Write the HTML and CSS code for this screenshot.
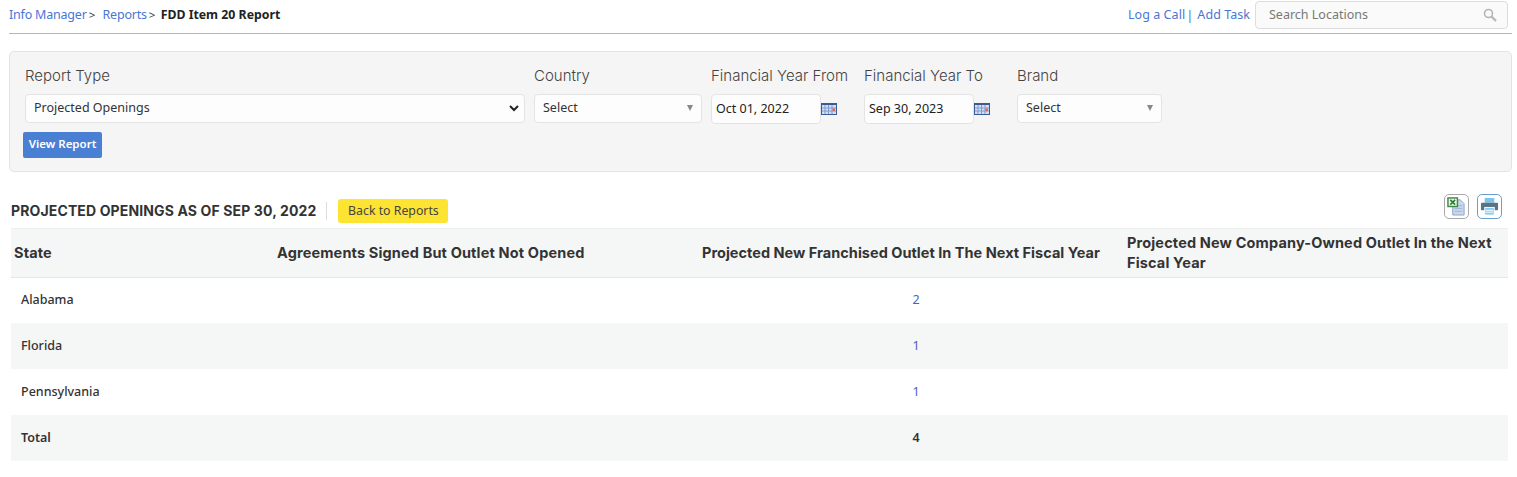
FILE: index.html
```html
<!DOCTYPE html>
<html lang="en">
<head>
    <meta charset="UTF-8">
    <title>FDD Item 20 Report</title>
    <link rel="stylesheet" href="styles.css">
</head>
<body>
    <div class="top-bar">
        <div class="breadcrumb">
            <a class="crumb-link">Info Manager</a><span class="crumb-sep first">&gt;</span>
            <a class="crumb-link">Reports</a><span class="crumb-sep">&gt;</span>
            <b class="crumb-current">FDD Item 20 Report</b>
        </div>
        <div class="top-actions">
            <a class="action-link">Log a Call</a><span class="action-sep">|</span>
            <a class="action-link">Add Task</a>
            <div class="search-box">
                <span class="search-text">Search Locations</span>
                <svg class="search-icon" width="14" height="14" viewBox="0 0 14 14">
                    <circle cx="5.5" cy="5.5" r="4" fill="none" stroke="#b5b5b5" stroke-width="1.6"/>
                    <path d="M8.5 8.5L13 13" stroke="#b5b5b5" stroke-width="2.2"/>
                </svg>
            </div>
        </div>
    </div>

    <div class="filter-panel">
        <div class="filter-row">
            <div class="field field-type">
                <label class="field-label">Report Type</label>
                <div class="select-box">
                    <span>Projected Openings</span>
                    <svg class="chevron" width="10" height="7" viewBox="0 0 10 7"><path d="M1 1l4 4 4-4" fill="none" stroke="#222" stroke-width="2"/></svg>
                </div>
            </div>
            <div class="field field-country">
                <label class="field-label">Country</label>
                <div class="select-box">
                    <span>Select</span><i class="caret"></i>
                </div>
            </div>
            <div class="field field-date">
                <label class="field-label">Financial Year From</label>
                <div class="date-wrap">
                    <div class="date-box">Oct 01, 2022</div>
                    <svg class="cal-icon" width="16" height="12" viewBox="0 0 16 12">
                        <rect width="16" height="12" fill="#3a5c94"/>
                        <rect x="1" y="2" width="14" height="9" fill="#d3def2"/>
                        <path d="M4 2v9M7.500 2v9M11 2v9M1 5h14M1 8h14" stroke="#7f9bd0" stroke-width="1"/>
                        <rect x="11.500" y="5.500" width="2.500" height="2.500" fill="#e0694f"/>
                    </svg>
                </div>
            </div>
            <div class="field field-date">
                <label class="field-label">Financial Year To</label>
                <div class="date-wrap">
                    <div class="date-box">Sep 30, 2023</div>
                    <svg class="cal-icon" width="16" height="12" viewBox="0 0 16 12">
                        <rect width="16" height="12" fill="#3a5c94"/>
                        <rect x="1" y="2" width="14" height="9" fill="#d3def2"/>
                        <path d="M4 2v9M7.500 2v9M11 2v9M1 5h14M1 8h14" stroke="#7f9bd0" stroke-width="1"/>
                        <rect x="11.500" y="5.500" width="2.500" height="2.500" fill="#e0694f"/>
                    </svg>
                </div>
            </div>
            <div class="field field-brand">
                <label class="field-label">Brand</label>
                <div class="select-box">
                    <span>Select</span><i class="caret"></i>
                </div>
            </div>
        </div>
        <button class="view-button">View Report</button>
    </div>

    <div class="report-head">
        <h2 class="report-title">PROJECTED OPENINGS AS OF SEP 30, 2022</h2>
        <button class="back-button">Back to Reports</button>
        <div class="report-tools">
            <span class="tool-btn tool-excel">
                <svg width="19" height="19" viewBox="0 0 20 20">
                    <path d="M6 3h8l4 4v12H6z" fill="#c9d7ec" stroke="#8ea6c8"/>
                    <path d="M8 9h8M8 12h8M8 15h8" stroke="#9db4d6"/>
                    <rect x="1" y="1" width="10" height="9" fill="#e9f3e6" stroke="#3e8a45" stroke-width="1.500"/>
                    <path d="M3.500 3l5 5M8.500 3l-5 5" stroke="#2b7a35" stroke-width="1.600"/>
                </svg>
            </span>
            <span class="tool-btn tool-print">
                <svg width="19" height="19" viewBox="0 0 20 20">
                    <rect x="5" y="1" width="10" height="5" fill="#7cc4ee"/>
                    <rect x="1" y="6" width="18" height="8" rx="1" fill="#5a7385"/>
                    <rect x="5" y="11" width="10" height="8" fill="#7fcdf2" stroke="#fff"/>
                    <path d="M6 14h8M6 16h8" stroke="#fff"/>
                </svg>
            </span>
        </div>
    </div>

    <table class="report-table">
        <colgroup>
            <col class="col-state">
            <col class="col-signed">
            <col class="col-franchised">
            <col class="col-company">
        </colgroup>
        <thead>
            <tr>
                <th>State</th>
                <th>Agreements Signed But Outlet Not Opened</th>
                <th class="head-tight">Projected New Franchised Outlet In The Next Fiscal Year</th>
                <th>Projected New Company-Owned Outlet In the Next Fiscal Year</th>
            </tr>
        </thead>
        <tbody>
            <tr class="first"><td class="state-cell">Alabama</td><td></td><td class="num-cell"><a class="num-link">2</a></td><td></td></tr>
            <tr class="alt"><td class="state-cell">Florida</td><td></td><td class="num-cell"><a class="num-link">1</a></td><td></td></tr>
            <tr><td class="state-cell">Pennsylvania</td><td></td><td class="num-cell"><a class="num-link">1</a></td><td></td></tr>
            <tr class="alt total"><td class="state-cell">Total</td><td></td><td class="num-cell">4</td><td></td></tr>
        </tbody>
    </table>
</body>
</html>
```

FILE: styles.css
```css
body {
    margin: 0;
    padding: 0 5px 0 9px;
    font-family: "Noto Sans", "Open Sans", sans-serif;
    font-size: 13px;
    color: #333;
    background: #fff;
}
.top-bar {
    display: flex;
    justify-content: space-between;
    align-items: center;
    height: 29px;
    padding-bottom: 4px;
    border-bottom: 1px solid #b5b5b5;
}
.breadcrumb {
    font-size: 12.5px;
    white-space: nowrap;
}
.crumb-link {
    color: #4a76d6;
    letter-spacing: -0.2px;
}
.crumb-sep {
    margin-left: 2px;
    font-size: 11.5px;
}
.crumb-sep.first {
    margin-right: 4px;
}
.crumb-sep + .crumb-current {
    margin-left: 2px;
}
.crumb-current {
    color: #222;
    font-size: 12.3px;
    font-weight: 700;
}
.top-actions {
    display: flex;
    align-items: center;
    padding-right: 4px;
}
.action-link {
    color: #4a76d6;
    font-size: 12.5px;
    letter-spacing: 0.05px;
}
.action-sep {
    margin: 0 4px 0 1px;
    color: #4a76d6;
}
.search-box {
    display: flex;
    justify-content: space-between;
    align-items: center;
    width: 253px;
    height: 28px;
    margin-left: 5px;
    padding: 0 10px 0 13px;
    box-sizing: border-box;
    border: 1px solid #ddd;
    border-radius: 4px;
    background: #fafafa;
}
.search-text {
    color: #777;
    font-size: 12.5px;
}
.filter-panel {
    margin-top: 17px;
    height: 121px;
    box-sizing: border-box;
    padding: 14px 14px 0 13px;
    background: #f5f5f5;
    border: 1px solid #e3e3e3;
    border-radius: 5px;
}
.filter-row {
    display: flex;
}
.field-label {
    display: block;
    height: 28px;
    line-height: 20px;
    font-family: Inter, sans-serif;
    font-size: 15px;
    font-weight: 300;
    color: #444;
    white-space: nowrap;
}
.field-type {
    width: 500px;
    margin: 0 9px 0 2px;
}
.field-country {
    width: 168px;
    margin-right: 9px;
}
.field-date {
    width: 153px;
}
.field-brand {
    width: 145px;
}
.select-box {
    display: flex;
    justify-content: space-between;
    align-items: center;
    height: 29px;
    padding: 0 5px 2px 8px;
    box-sizing: border-box;
    background: #fdfdfd;
    border: 1px solid #e4e4e4;
    border-radius: 4px;
    font-size: 12.5px;
}
.caret {
    width: 0;
    height: 0;
    margin-right: 3px;
    border-left: 3px solid transparent;
    border-right: 3px solid transparent;
    border-top: 6px solid #888;
}
.chevron {
    margin-top: 2px;
}
.date-wrap {
    display: flex;
    align-items: center;
}
.date-box {
    width: 110px;
    height: 30px;
    line-height: 28px;
    padding-left: 4px;
    box-sizing: border-box;
    background: #fdfdfd;
    border: 1px solid #e4e4e4;
    border-radius: 4px;
    font-size: 12.5px;
    color: #222;
}
.view-button {
    display: block;
    width: 79px;
    height: 26px;
    margin-top: 8px;
    padding: 0 0 3px;
    border: none;
    border-radius: 2px;
    background: #4a80d4;
    color: #fff;
    font-family: "Noto Sans", sans-serif;
    font-size: 11.5px;
    font-weight: 600;
}
.report-head {
    position: relative;
    display: flex;
    align-items: center;
    height: 56px;
    padding-left: 2px;
}
.report-title {
    margin: 22px 0 0 0;
    padding-right: 10px;
    border-right: 1px solid #ddd;
    font-family: Inter, sans-serif;
    font-size: 14px;
    letter-spacing: 0.13px;
    line-height: 18px;
    font-weight: 700;
    color: #333;
}
.back-button {
    width: 110px;
    height: 24px;
    margin: 22px 0 0 11px;
    padding: 0 0 1px;
    border: none;
    border-radius: 3px;
    background: #fde332;
    color: #444;
    font-family: "Noto Sans", sans-serif;
    font-size: 12.3px;
}
.report-tools {
    position: absolute;
    top: 22px;
    right: 10px;
    display: flex;
    gap: 8px;
}
.tool-btn {
    display: flex;
    align-items: center;
    justify-content: center;
    width: 25px;
    height: 25px;
    box-sizing: border-box;
    border: 1px solid #aaa;
    border-radius: 5px;
}
.tool-print {
    border-color: #6c9fc9;
}
.report-table {
    width: 1497px;
    margin-left: 2px;
    border-collapse: collapse;
    table-layout: fixed;
}
.col-state { width: 263px; }
.col-signed { width: 425px; }
.col-franchised { width: 425px; }
.col-company { width: 384px; }
.report-table th {
    height: 49px;
    padding: 0 3px;
    box-sizing: border-box;
    background: #f5f6f6;
    border-top: 1px solid #eee;
    border-bottom: 1px solid #e6e6e6;
    font-family: Inter, sans-serif;
    font-size: 14.5px;
    letter-spacing: 0.15px;
    line-height: 20px;
    font-weight: 700;
    color: #333;
    text-align: left;
}
.report-table th.head-tight {
    letter-spacing: 0.02px;
}
.report-table td {
    height: 46px;
    padding: 0 10px;
    box-sizing: border-box;
    font-size: 12.5px;
    color: #333;
}
.report-table .first td {
    height: 45px;
    padding-bottom: 2px;
}
.report-table .alt td {
    background: #f5f6f6;
}
.state-cell {
    font-weight: 500;
}
.report-table td.num-cell {
    padding-left: 19px;
    text-align: center;
}
.num-link {
    color: #4b5fc4;
}
.total td {
    font-weight: 600;
}
```
